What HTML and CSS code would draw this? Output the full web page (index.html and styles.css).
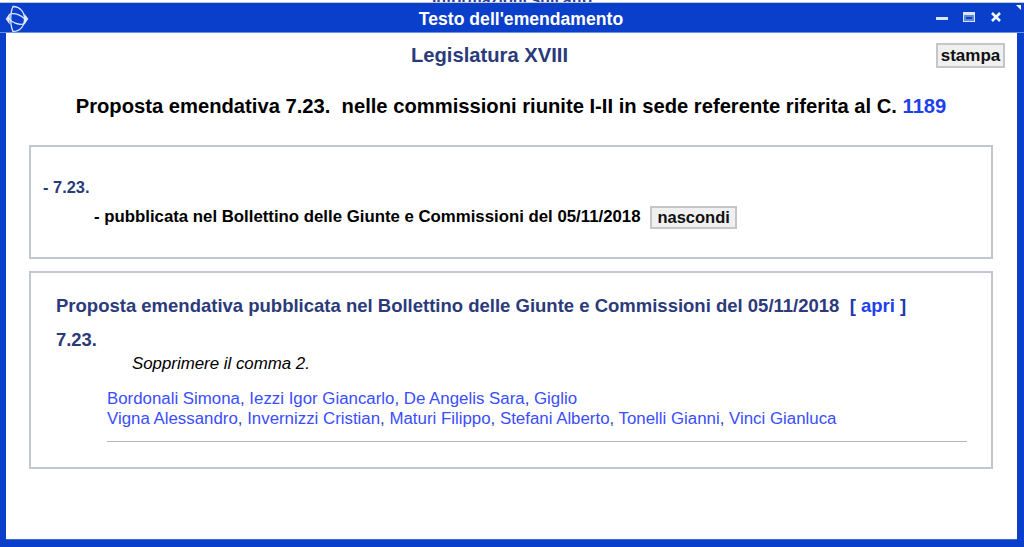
FILE: index.html
```html
<!DOCTYPE html>
<html lang="it">
<head>
  <meta charset="UTF-8" />
  <title>Testo dell'emendamento</title>
  <link rel="stylesheet" href="styles.css">
</head>
<body>
  <div class="behind"><span>Informazioni sull'atto</span></div>
  <div class="window">
    <div class="titlebar">
      <svg class="logo" width="24" height="28" viewBox="0 0 24 28" fill="none" stroke="#dfe8fb" stroke-width="1.300">
        <path d="M8 1.500 C15 1.500 19.500 7 19.500 14 C19.500 21 15 26.500 8 26.500 C5 20 5 8 8 1.500 Z" />
        <ellipse cx="12" cy="14" rx="9" ry="4.500" transform="rotate(22 12 14)" />
        <path d="M1.500 14 L4 10.500 L4 17.500 Z" fill="#dfe8fb" />
        <path d="M22.500 14 L20 10.500 L20 17.500 Z" fill="#dfe8fb" />
      </svg>
      <span class="title">Testo dell'emendamento</span>
      <div class="controls">
        <svg width="14" height="12" viewBox="0 0 14 12"><rect x="1" y="6" width="12" height="3" fill="#dbe6fa" /></svg>
        <svg width="14" height="12" viewBox="0 0 14 12"><rect x="1.500" y="1.500" width="11" height="9" fill="#5d86dc" stroke="#dbe6fa" /><rect x="2" y="2" width="10" height="2" fill="#dbe6fa" /><rect x="4" y="6" width="6" height="2" fill="#0a3fcb" /></svg>
        <svg width="14" height="12" viewBox="0 0 14 12"><path d="M3 2 L11 10 M11 2 L3 10" stroke="#f2f6ff" stroke-width="2.600" /></svg>
      </div>
      <span class="corner"></span>
    </div>
    <div class="content">
      <div class="top-row">
        <h2 class="legislature">Legislatura XVIII</h2>
        <button class="btn btn-print">stampa</button>
      </div>
      <h1 class="heading">Proposta emendativa 7.23.&nbsp; nelle commissioni riunite I-II in sede referente riferita al C. <a href="#">1189</a></h1>

      <div class="box box-first">
        <div class="ref">- 7.23.</div>
        <div class="pub">- pubblicata nel Bollettino delle Giunte e Commissioni del 05/11/2018 <button class="btn btn-hide">nascondi</button></div>
      </div>

      <div class="box box-second">
        <div class="pub-title">Proposta emendativa pubblicata nel Bollettino delle Giunte e Commissioni del 05/11/2018&nbsp; <span class="bracket">[ <a href="#">apri</a> ]</span></div>
        <div class="number">7.23.</div>
        <p class="text">Sopprimere il comma 2.</p>
        <div class="signers">
          <a href="#">Bordonali Simona</a>, <a href="#">Iezzi Igor Giancarlo</a>, <a href="#">De Angelis Sara</a>, <a href="#">Giglio</a><br>
          <a href="#">Vigna Alessandro</a>, <a href="#">Invernizzi Cristian</a>, <a href="#">Maturi Filippo</a>, <a href="#">Stefani Alberto</a>, <a href="#">Tonelli Gianni</a>, <a href="#">Vinci Gianluca</a>
        </div>
        <hr class="rule">
      </div>
    </div>
  </div>
</body>
</html>
```

FILE: styles.css
```css
html, body {
  margin: 0;
  height: 100%;
  overflow: hidden;
}
body {
  font-family: "Liberation Sans", Arial, sans-serif;
  background: #fff;
  display: flex;
  flex-direction: column;
}
a {
  color: #2040f0;
  text-decoration: none;
}
.behind {
  height: 2px;
  overflow: hidden;
  background: #fff;
  text-align: center;
  line-height: 0;
  color: #2f3f9a;
  font-size: 16px;
  font-weight: bold;
  flex: none;
}
.window {
  flex: 1;
  display: flex;
  flex-direction: column;
  min-height: 0;
  background: #0a3fcb;
  border-top: 1px solid #c4c8d0;
}
.titlebar {
  height: 29px;
  flex: none;
  display: flex;
  align-items: center;
  justify-content: center;
  position: relative;
  border-bottom: 1px solid #6d92e4;
}
.logo {
  position: absolute;
  left: 5px;
  top: 2px;
}
.title {
  color: #fff;
  font-size: 17.600px;
  font-weight: bold;
  margin: 3px 0 0 18px;
}
.controls {
  position: absolute;
  right: 21px;
  top: 8px;
  display: flex;
  gap: 13px;
}
.corner {
  position: absolute;
  right: 3px;
  top: 2px;
  border-top: 5px solid #fff;
  border-left: 5px solid transparent;
}
.content {
  flex: 1;
  background: #fff;
  margin: 0 7px 7px 6px;
  padding: 0 24px 0 23px;
  border-bottom: 1px solid #3f6ad8;
  min-height: 0;
}
.top-row {
  display: flex;
  justify-content: center;
  position: relative;
  height: 61px;
}
.legislature {
  margin: 11px 0 0 -43px;
  font-size: 20.200px;
  line-height: 23px;
  color: #2b3a7a;
}
.btn {
  font-family: inherit;
  font-weight: bold;
  color: #111;
  background: #f0f0f0;
  border: 2px solid #c4c6c8;
  padding: 0;
}
.btn-print {
  position: absolute;
  right: -12px;
  top: 10px;
  width: 69px;
  height: 25px;
  font-size: 17px;
}
.btn-hide {
  width: 87px;
  height: 23px;
  font-size: 16.500px;
  margin-left: 5px;
  vertical-align: middle;
}
.heading {
  margin: 0 0 27px 0;
  font-size: 20.200px;
  line-height: 24px;
  color: #000;
  text-align: center;
}
.box {
  border: 2px solid #c3c5d0;
  box-sizing: border-box;
}
.box-first {
  height: 114px;
  padding: 30px 12px 0 12px;
  margin-bottom: 12px;
}
.ref {
  font-size: 16.400px;
  font-weight: bold;
  line-height: 20px;
  color: #2b3a7a;
}
.pub {
  margin: 8px 0 0 51px;
  font-size: 16.800px;
  font-weight: bold;
  line-height: 24px;
  color: #000;
}
.box-second {
  height: 198px;
  padding: 22px 24px 0 25px;
}
.pub-title {
  font-size: 18.500px;
  font-weight: bold;
  line-height: 22px;
  color: #2b3a7a;
}
.bracket {
  color: #1f3ab0;
}
.bracket a {
  color: #2040f0;
}
.number {
  margin-top: 12px;
  font-size: 18.400px;
  font-weight: bold;
  line-height: 22px;
  color: #2b3a7a;
}
.text {
  margin: 3px 0 0 76px;
  font-size: 16.850px;
  line-height: 20px;
  font-style: italic;
  color: #000;
}
.signers {
  margin: 15px 0 0 51px;
  font-size: 16.850px;
  line-height: 20px;
  color: #2a3fc0;
}
.signers a {
  color: #3a4dff;
}
.rule {
  margin: 12px 0 0 51px;
  border: 0;
  height: 1px;
  background: #b5b7bc;
}
```
